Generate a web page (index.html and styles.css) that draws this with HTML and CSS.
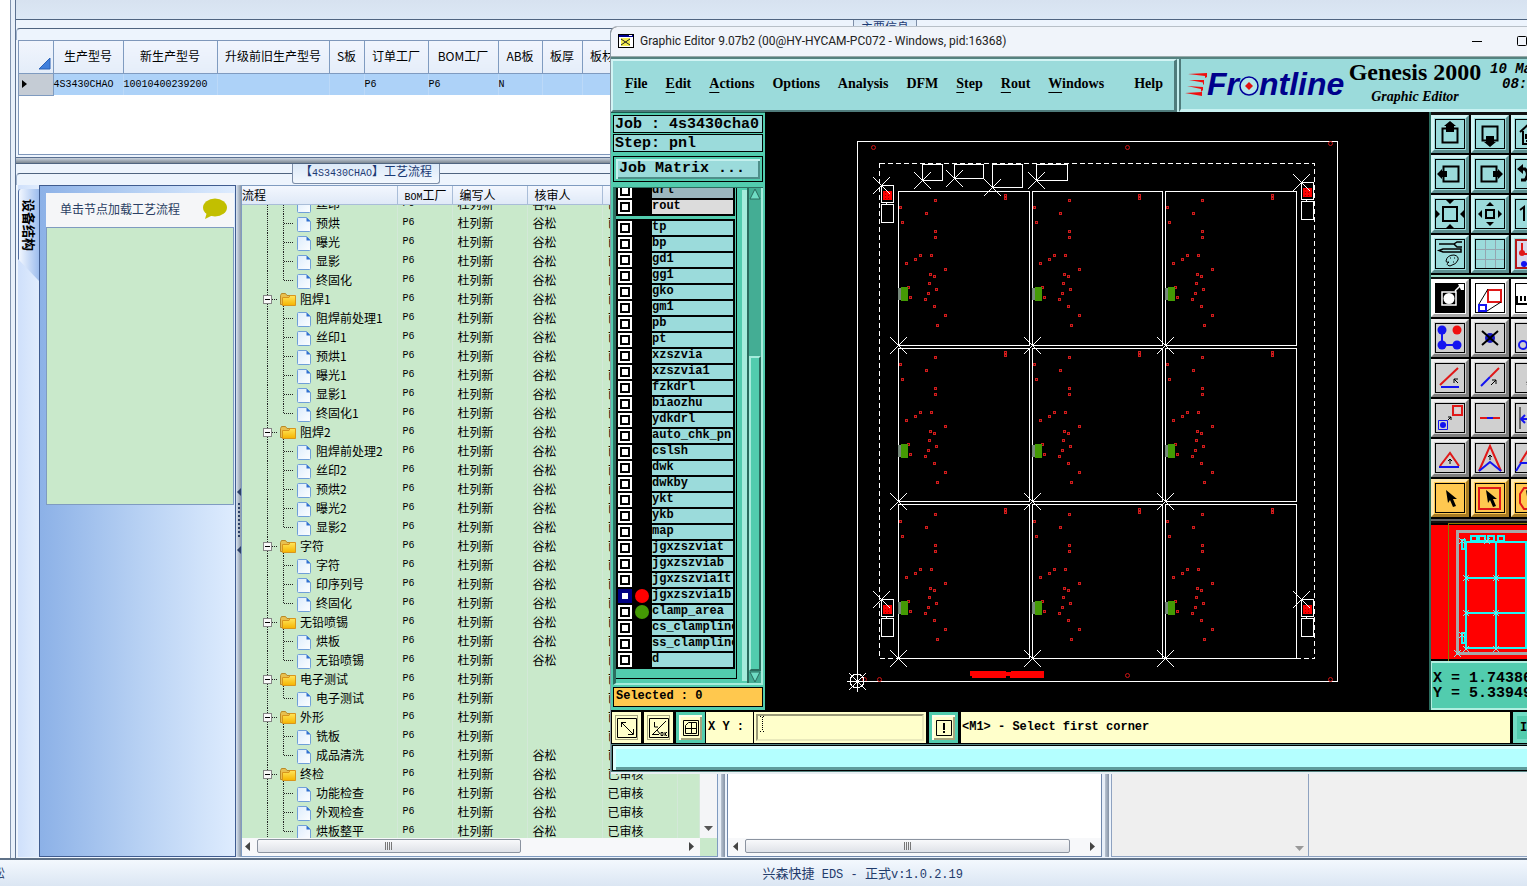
FILE: index.html
```html
<!DOCTYPE html>
<html lang="zh-CN">
<head>
<meta charset="utf-8">
<title>兴森快捷 EDS</title>
<link rel="stylesheet" href="styles.css">
</head>
<body>
<svg class="defs" aria-hidden="true">
  <defs>
    <linearGradient id="page-fill" x1="0" y1="0" x2="1" y2="1"><stop offset="0" stop-color="#dcecfc"/><stop offset="1" stop-color="#fdfeff"/></linearGradient>
    <linearGradient id="folder-fill" x1="0" y1="0" x2="0" y2="1"><stop offset="0" stop-color="#ffe65c"/><stop offset="1" stop-color="#f5b400"/></linearGradient>
    <g id="page"><path d="M.5 1.500q0-1 1-1H9.500l4 4V13.500q0 1-1 1H1.500q-1 0-1-1z" fill="url(#page-fill)" stroke="#6f9fd8"/><path d="M9.500.5v4h4z" fill="#2f6fd0"/></g>
    <g id="folder"><path d="M.5 2.500V11.500H14.500V2.500H7L5.500.5H1.500z" fill="#e8c050" stroke="#b98a28"/><path d="M2.500 12.500V4.500H9L10 2.500h5.500v10z" fill="url(#folder-fill)" stroke="#d8951c"/></g>
    <symbol id="row-folder" viewBox="0 0 58 19"><path d="M25.500 0V19M30 9.500h5" class="twig"/><path d="M41.500 16v3" class="twig"/><rect x="21.500" y="5.500" width="8" height="8" fill="#f8f8f8" stroke="#858585"/><path d="M23 9.500h5" stroke="#000"/><use href="#folder" x="38" y="3"/></symbol>
    <symbol id="row-child" viewBox="0 0 74 19"><path d="M25.500 0V19M41.500 0V19M42 9.500h10" class="twig"/><use href="#page" x="55" y="3"/></symbol>
    <symbol id="row-last" viewBox="0 0 74 19"><path d="M25.500 0V19M41.500 0V10M42 9.500h10" class="twig"/><use href="#page" x="55" y="3"/></symbol>
    <g id="cross"><path d="M-8-8L9 9M9-8L-8 9" stroke="#fff"/></g>
  </defs>
</svg>

<div class="app">
  <div class="edge"></div>
  <main class="work">
    <div class="ribbon"></div>
    <section class="group info">
      <div class="caption"><span class="rule lead-info"></span><h2 class="tab">主要信息</h2><span class="rule grow"></span></div>
      <div class="info-box">
        <table class="info-table">
          <colgroup><col class="w-mark"><col class="w-model"><col class="w-new"><col class="w-old"><col class="w-s"><col class="w-order"><col class="w-bom"><col class="w-ab"><col class="w-thick"><col class="w-thick"><col></colgroup>
          <thead><tr><th class="corner"><svg width="12" height="12"><path d="M11 0V11H0z" fill="#3f7fdc" stroke="#2a62b8"/></svg></th><th>生产型号</th><th>新生产型号</th><th>升级前旧生产型号</th><th>S板</th><th>订单工厂</th><th>BOM工厂</th><th>AB板</th><th>板厚</th><th>板材</th><th></th></tr></thead>
          <tbody><tr><td class="mark"><svg width="5" height="8"><path d="M0 0v8L5 4z"/></svg></td><td>4S3430CHAO</td><td>10010400239200</td><td></td><td></td><td>P6</td><td>P6</td><td>N</td><td></td><td></td><td></td></tr></tbody>
        </table>
      </div>
    </section>
    <div class="hsplit"></div>
    <section class="group flow">
      <div class="caption"><span class="rule lead-flow"></span><h2 class="tab">【<span class="code">4S3430CHAO</span>】工艺流程</h2><span class="rule grow"></span></div>
      <div class="columns">
        <nav class="side-tabs"><button class="side-tab" type="button">设备结构</button></nav>
        <aside class="side-panel">
          <div class="hint"><span>单击节点加载工艺流程</span><svg width="26" height="22" viewBox="0 0 26 22"><ellipse cx="13" cy="9.500" rx="12" ry="9" fill="#c2bf00"/><path d="M5 14L3 21l8-4z" fill="#c2bf00"/></svg></div>
          <div class="nodes"></div>
        </aside>
        <div class="vsplit"><svg width="6" height="66" viewBox="0 0 6 66"><path d="M5 0v8L1 4zM5 58v8L1 62z" fill="#2c3f66"/><path d="M3 15V50" stroke="#2c3f66" stroke-width="2" stroke-dasharray="2 2"/></svg></div>
        <section class="tree-box">
          <table class="tree">
            <thead><tr><th class="c-name">流程</th><th class="c-bom"><span class="code">BOM</span>工厂</th><th class="c-who">编写人</th><th class="c-who">核审人</th><th class="c-who"></th><th></th></tr></thead>
          </table>
          <div class="tree-body">
            <div class="tree-view"><table class="tree"><tbody id="tree-rows"></tbody></table></div>
            <div class="vbar"><svg width="9" height="5"><path d="M0 0h9L4.500 5z" fill="#555"/></svg></div>
          </div>
          <div class="hbar with-corner"><svg width="6" height="9"><path d="M5 0v9L0 4.500z" fill="#444"/></svg><span class="track"><span class="thumb thumb-tree"><i></i></span></span><svg width="6" height="9"><path d="M0 0v9L5 4.500z" fill="#444"/></svg></div>
        </section>
        <div class="vgap"></div>
        <section class="mid-box">
          <div class="mid-view"></div>
          <div class="hbar"><svg width="6" height="9"><path d="M5 0v9L0 4.500z" fill="#444"/></svg><span class="track"><span class="thumb thumb-mid"><i></i></span></span><svg width="6" height="9"><path d="M0 0v9L5 4.500z" fill="#444"/></svg></div>
        </section>
        <div class="vgap"></div>
        <section class="list-box"><svg width="9" height="5"><path d="M0 0h9L4.500 5z" fill="#999"/></svg></section>
        <section class="rest-box"></section>
      </div>
    </section>
  </main>
</div>
<footer class="status"><span class="user">谷松</span><span class="version">兴森快捷<span class="latin"> EDS - </span>正式<span class="latin">v:1.0.2.19</span></span></footer>

<div class="window">
  <header class="titlebar">
    <svg width="16" height="14" viewBox="0 0 16 14"><rect x=".5" y=".5" width="15" height="13" fill="#fff" stroke="#000"/><path d="M1 1h14v2H1z" fill="#000090"/><path d="M11 1.500h3" stroke="#fff"/><rect x="3" y="4" width="9" height="8" fill="#f5ee50"/><path d="M3 5l9 6M12 5l-9 6" stroke="#222"/></svg>
    <h1>Graphic Editor 9.07b2 (00@HY-HYCAM-PC072 - Windows, pid:16368)</h1>
    <button class="win-btn" type="button" aria-label="Minimize"><svg width="10" height="10"><path d="M0 5.500h10" stroke="#000"/></svg></button>
    <button class="win-btn" type="button" aria-label="Maximize"><svg width="10" height="10"><rect x=".5" y=".5" width="9" height="9" rx="1" fill="none" stroke="#000"/></svg></button>
  </header>
  <div class="top">
    <nav class="menu">
      <a href="#"><u>F</u>ile</a><a href="#"><u>E</u>dit</a><a href="#"><u>A</u>ctions</a><a href="#">Options</a><a href="#">Analysis</a><a href="#">DFM</a><a href="#"><u>S</u>tep</a><a href="#"><u>R</u>out</a><a href="#"><u>W</u>indows</a><a href="#" class="help">Help</a>
    </nav>
    <div class="brand">
      <div class="logo">
        <svg width="22" height="24" viewBox="0 0 22 24"><path d="M3 2L22 1V5L20 6V4zM4 8L19 8V12L18 13V10.500zM2 14L18 15V18L16 20V17zM0 21L17 20V24z" fill="#f01010"/></svg>
        <span class="logo-text">Fr<svg width="20" height="20" viewBox="0 0 20 20"><circle cx="10" cy="10" r="9" fill="#b4e6ea" stroke="#00009a" stroke-width="1.500"/><path d="M10 6l4 4-4 4-4-4z" fill="#e01010"/></svg>ntline</span>
      </div>
      <div class="product"><b>Genesis 2000</b><i>Graphic Editor</i></div>
      <div class="clock"><span>10 Mar</span><span>08:35</span></div>
    </div>
  </div>
  <div class="middle">
    <aside class="layers">
      <div class="field">Job : 4s3430cha0</div>
      <div class="field">Step: pnl</div>
      <button class="matrix" type="button">Job Matrix ...</button>
      <div class="layer-area">
        <div class="layer-frame" id="layer-list"></div>
        <div class="layer-bar"><svg width="12" height="12"><path d="M1 11L6 1l5 10z" fill="#6fdcc4" stroke="#2a6c5e"/></svg><span class="layer-thumb"></span><svg width="12" height="12"><path d="M1 1L6 11L11 1z" fill="#6fdcc4" stroke="#2a6c5e"/></svg></div>
      </div>
      <div class="selected">Selected : 0</div>
    </aside>
    <div class="canvas">
      <svg width="663" height="598" viewBox="765 112 663 598" shape-rendering="crispEdges" fill="none">
        <defs>
          <g id="unit">
            <g id="vias"></g>
            <path d="M3 96h7v14H3z" fill="#449a04"/><path d="M0 97h3v12H0z" fill="#75887a"/>
          </g>
          <g id="fiducial"><path d="M.5.5h12v17h-12zM.5 19.500h12v18h-12zM5.500 17v2" stroke="#fff"/><path d="M2 6h9v9H2z" fill="#f00"/><path d="M4.500 7v7M7.500 7v7" stroke="#900" stroke-dasharray="1 2"/><use href="#cross"/></g>
          <g id="origin" stroke="#fff"><circle r="7"/><path d="M-10 .5H11M.5-10V11M-8-8L9 9M9-8L-8 9"/></g>
        </defs>
        <g stroke="#fff">
          <path d="M857.500 141.500H1337.500V681.500H857.500z"/>
          <path d="M879.500 163.500H1314.500V658.500H879.500z" stroke-dasharray="5 3"/>
          <path d="M922.500 164.500h20v16h-20zM954.500 164.500h29v14h-29zM992.500 164.500h30v23h-30zM1036.500 164.500h31v16h-31z"/>
          <path d="M898.500 191.500h131v154h-131zM1032.500 191.500h130v154h-130zM1165.500 191.500h131v154h-131zM898.500 348.500h131v153h-131zM1032.500 348.500h130v153h-130zM1165.500 348.500h131v153h-131zM898.500 504.500h131v154h-131zM1032.500 504.500h130v154h-130zM1165.500 504.500h131v154h-131z"/>
        </g>
        <g id="units"></g>
        <g id="crosses"></g>
        <use href="#fiducial" x="881" y="185"/><use href="#fiducial" x="1301" y="182"/><use href="#fiducial" x="881" y="599"/><use href="#fiducial" x="1301" y="599"/>
        <g stroke="#d01414" shape-rendering="auto"><circle cx="873.500" cy="147.500" r="2"/><circle cx="1127.500" cy="147.500" r="2"/><circle cx="1330.500" cy="143.500" r="2"/><circle cx="1127.500" cy="675.500" r="2"/><circle cx="1330.500" cy="679.500" r="2"/><circle cx="864.500" cy="679.500" r="2"/><circle cx="879.500" cy="679.500" r="2"/></g>
        <path d="M970 671h36v1h5v-1h33v7h-34v-2h-4v2h-34v-2h-2z" fill="#f00"/>
        <use href="#origin" x="857" y="681"/>
      </svg>
    </div>
    <aside class="tools">
      <div class="pad" id="pad-view"></div>
      <div class="pad edit" id="pad-edit"></div>
      <div class="overview">
        <svg width="136" height="138" viewBox="1430 524 136 138" shape-rendering="crispEdges" fill="none">
          <path d="M1430 526h136v134h-136z" fill="#f00"/>
          <path d="M1447.500 662V524.500H1566" stroke="#8a7a00"/>
          <path d="M1566 532.500H1456.500V654.500H1566" stroke="#a8a8a8" stroke-width="3"/>
          <path d="M1566 543H1465V649H1566M1465 578.500H1566M1465 613.500H1566M1495 543V649M1525 543V649" stroke="#20f4f4" stroke-width="2"/>
          <path d="M1470 537h6v5h-6zM1478 537h6v5h-6zM1487 537h6v5h-6zM1497 537h6v5h-6zM1461 541h3v9h-3zM1461 634h3v10h-3z" stroke="#20f4f4" stroke-width="2"/>
          <g stroke="#7ce8e8"><path d="M1458 539l6 6m0-6l-6 6M1462 576l6 6m0-6l-6 6M1492 576l6 6m0-6l-6 6M1462 611l6 6m0-6l-6 6M1492 611l6 6m0-6l-6 6M1462 647l6 6m0-6l-6 6M1492 647l6 6m0-6l-6 6M1453 651l7 7m0-7l-7 7M1458 633l6 6m0-6l-6 6M1483 539l6 6m0-6l-6 6"/></g>
        </svg>
      </div>
      <div class="coords"><span>X = 1.74386</span><span>Y = 5.33949</span></div>
    </aside>
  </div>
  <div class="prompt">
    <button class="key" type="button" aria-label="Diagonal"><svg width="20" height="20" viewBox="0 0 20 20"><path d="M.5.5h19v19H.5zM4 4l12 12M4.500 9V4.500H9M16.500 11v5.500H11" fill="none" stroke="#000"/></svg></button>
    <button class="key" type="button" aria-label="Angle"><svg width="20" height="20" viewBox="0 0 20 20"><path d="M.5.5h19v19H.5zM3 17L17 3M3 16.500H10M5.500 4v5H9M8 12l3 4" fill="none" stroke="#000"/><path d="M12 14.500h2v3h-2zM16 14v4M18 14l-2 2 2 2" fill="none" stroke="#000"/></svg></button>
    <button class="key on" type="button" aria-label="Grid"><svg width="16" height="16" viewBox="0 0 16 16"><path d="M.5.5h15v15H.5zM2.500 5.500L5.500 2.500H13.500V13.500H2.500zM8.500 2.500V13.500M2.500 8.500H13.500" fill="none" stroke="#000"/></svg></button>
    <label class="xy" for="xy-input">X Y :</label>
    <div class="entry"><input id="xy-input" type="text"><svg class="caret" width="5" height="16"><path d="M0 .5h2M3 .5h2M2.500 1v14M0 15.500h2M3 15.500h2" stroke="#000" stroke-dasharray="1 1"/></svg></div>
    <button class="key on" type="button" aria-label="Alert"><svg width="16" height="16" viewBox="0 0 16 16"><path d="M.5.5h15v15H.5z" fill="none" stroke="#000"/><path d="M8 3v7M8 11v2" stroke="#000" stroke-width="2"/></svg></button>
    <div class="message">&lt;M1&gt; - Select first corner</div>
    <button class="unit-btn" type="button">Inch</button>
  </div>
  <div class="console"><div class="console-line"></div></div>
</div>
<script src="app.js"></script>
</body>
</html>
```
FILE: styles.css
```css
* { box-sizing: border-box; }
html, body { height: 100%; }
body {
  margin: 0; overflow: hidden; display: flex; flex-direction: column; position: relative;
  background: #dce7f4; color: #000;
  font: 12px/16px "Noto Sans CJK SC", sans-serif;
}
svg { display: block; flex: none; }
button, input { font: inherit; color: inherit; margin: 0; padding: 0; border-radius: 0; }
button { cursor: pointer; }
h1, h2 { margin: 0; font-weight: 400; }
.defs { position: absolute; width: 0; height: 0; }
.twig { stroke: #222; stroke-dasharray: 1 1; fill: none; }
.code { font-family: "Liberation Mono", monospace; font-size: 10px; line-height: 10px; }

.app { flex: 1; min-height: 0; display: flex; }
.edge { width: 15px; background: linear-gradient(90deg, #fff 10px, #8093ae 10px, #8093ae 11px, #e8f0fa 11px); }
.work { flex: 1; min-width: 0; display: flex; flex-direction: column; border-left: 1px solid #5d7291; background: #edf4fd; }
.ribbon { height: 19px; background: linear-gradient(#d7e2f0, #dce8f5); }
.group { border-top: 1px solid #4f6480; background: #edf4fd; display: flex; flex-direction: column; }
.caption { display: flex; height: 20px; }
.rule { border-top: 1px solid #4f6480; margin-top: 8px; }
.lead-info { width: 837px; }
.lead-flow { width: 276px; }
.rule.lead-info, .rule.lead-flow { border-left: 1px solid #9fb2cc; border-top-left-radius: 4px; }
.grow { flex: 1; }
.tab { border: 1px solid #7d8ea8; border-top: 0; border-radius: 0 0 3px 3px; padding: 0 7px; font-size: 12px; line-height: 14px; color: #1c3a73; background: linear-gradient(#dce9f8, #f3f8fe); }
.info { height: 139px; border-bottom: 1px solid #5a6f90; }
.info-box { flex: 1; margin: 0 0 2px 2px; border: 1px solid #7f97ba; border-right: 0; background: #fff; overflow: hidden; }
.info-table { border-collapse: collapse; table-layout: fixed; width: 100%; }
.info-table th { height: 32px; padding: 0 0 2px; font-weight: 400; border-right: 1px solid #7f9bc0; border-bottom: 1px solid #7f9bc0; background: linear-gradient(#f1f5fd, #e4edf9); white-space: nowrap; overflow: hidden; }
.info-table td { height: 22px; padding: 0; font: 10px/21px "Liberation Mono", monospace; background: #add2f8; border-right: 1px solid #bcd9f8; }
.info-table .mark { background: #c5ccd5; border-right: 1px solid #7f9bc0; border-bottom: 1px solid #7f9bc0; padding-left: 3px; }
.info-table .corner { padding: 14px 0 0 20px; }
.w-mark { width: 34px; } .w-model { width: 70px; } .w-new { width: 94px; } .w-old { width: 112px; } .w-s { width: 35px; }
.w-order { width: 64px; } .w-bom { width: 70px; } .w-ab { width: 44px; } .w-thick { width: 40px; }
.hsplit { height: 5px; background: linear-gradient(#c9d2dd, #7c8792); }

.flow { flex: 1; min-height: 0; padding-bottom: 1px; }
.flow .rule { margin-top: 9px; }
.flow .caption { height: 21px; }
.flow .tab { height: 20px; }
.columns { flex: 1; min-height: 0; display: flex; padding-left: 2px; }
.side-tabs { width: 22px; background: linear-gradient(90deg, #cfe0fb, #e0ecfd); border-right: 1px solid #3f5c90; padding-top: 4px; }
.side-tab { display: block; width: 21px; height: 92px; border: 0; border-left: 1px solid #4f6ca0; border-radius: 3px 0 0 0; background: linear-gradient(90deg, #f2f7ff, #9dbdee); clip-path: polygon(0 0, 100% 0, 100% 100%, 0 76%); writing-mode: vertical-rl; text-orientation: sideways; font-size: 13px; line-height: 18px; font-weight: 700; text-align: left; padding: 10px 0 0; }
.side-panel { width: 196px; border: 1px solid #3f5c90; border-left: 0; padding: 7px 1px 0 6px; background: linear-gradient(90deg, #8cb1e7 0, #b6d0f3 50%, #deecfe 100%); }
.hint { height: 34px; background: #f5f6f8; display: flex; align-items: center; justify-content: space-between; padding: 0 6px 2px 14px; color: #2b3f63; }
.nodes { height: 278px; background: #c9e9cb; border: 1px solid #7f9bc0; }
.vsplit { width: 5px; display: flex; align-items: center; background: linear-gradient(90deg, #dbe5f1, #8b98a8); }
.tree-box { width: 477px; display: flex; flex-direction: column; background: #c9e9cb; border: 1px solid #7f9bc0; }
.tree { border-collapse: collapse; table-layout: fixed; width: 100%; }
.tree thead { height: 18px; }
.tree th { height: 18px; padding: 0 0 0 7px; text-align: left; font-weight: 400; line-height: 16px; background: linear-gradient(#f3f7fe, #dfe9f7); border-right: 1px solid #a9bdd8; border-bottom: 1px solid #a9bdd8; white-space: nowrap; }
.tree th.c-name { padding-left: 0; }
.c-name { width: 155px; } .c-bom { width: 55px; } .c-who { width: 75px; }
.tree td { height: 19px; padding: 0 0 0 5px; line-height: 18px; white-space: nowrap; border-right: 1px solid #d3e8d8; overflow: hidden; }
.tree td.c-name { padding: 0; }
.tree td.c-bom { font: 10px/18px "Liberation Mono", monospace; }
.name { display: flex; }
.tree-body { flex: 1; min-height: 0; display: flex; }
.tree-view { flex: 1; min-width: 0; overflow: hidden; }
.tree-view .tree { margin-top: -10px; }
.vbar { width: 17px; background: #f4f5f7; display: flex; align-items: flex-end; justify-content: center; padding-bottom: 7px; }
.hbar { height: 18px; display: flex; align-items: center; gap: 6px; padding: 0 5px 2px; background: #f7f8fa; }
.with-corner { margin-right: 17px; padding-left: 3px; }
.track { flex: 1; display: flex; }
.thumb { height: 14px; border: 1px solid #8b93a0; border-radius: 2px; background: linear-gradient(#f8f9fb, #dfe2e8); display: flex; align-items: center; justify-content: center; }
.thumb i { width: 8px; height: 8px; background: repeating-linear-gradient(90deg, #777 0 1px, transparent 1px 2px); }
.thumb-tree { width: 62%; }
.thumb-mid { width: 96%; }
.vgap { width: 9px; background: linear-gradient(90deg, #e8eff8 3px, #b9c4d2 3px, #8492a5 7px, #edf4fd 7px); }
.mid-box { width: 375px; border: 1px solid #6f87ab; display: flex; flex-direction: column; background: #fff; }
.mid-view { flex: 1; }
.list-box { width: 198px; border: 1px solid #8ea2c0; background: #efefef; display: flex; align-items: flex-end; justify-content: flex-end; padding: 0 4px 5px; }
.rest-box { flex: 1; background: #f0f0f0; border-bottom: 1px solid #8ea2c0; }
.status { height: 28px; display: flex; border-top: 2px solid #5f7187; background: linear-gradient(#f3f8fe, #dbe6f3); color: #1f3b6b; line-height: 26px; overflow: hidden; }
.user { width: 50%; margin-left: -19px; }
.version { margin-left: 18px; font-size: 13px; white-space: pre; }
.latin { font: 12px/16px "Liberation Mono", monospace; }

/* Graphic Editor window, floating over the desktop application */
.window { position: absolute; left: 610px; right: -40px; top: 26px; bottom: 112px; display: flex; flex-direction: column; background: #000; border-left: 1px solid #8b9aa6; border-top: 1px solid #b8c0c8; border-radius: 7px 7px 0 0; overflow: hidden; }
.titlebar { height: 30px; display: flex; align-items: center; gap: 6px; padding: 0 0 2px 7px; background: #f0f4fa; border-bottom: 1px solid #9aa; }
.titlebar h1 { flex: 1; font: 12px/16px Roboto, "Open Sans", sans-serif; color: #222; }
.win-btn { width: 39px; height: 28px; border: 0; background: none; display: grid; place-items: center; }
.win-btn:last-child { margin-right: 26px; }
.top { height: 55px; display: flex; background: #c3eeee; border-top: 2px solid #55827f; }
.menu { width: 566px; display: flex; gap: 18px; align-items: center; padding: 0 11px 4px 12px; margin-right: 2px; background: #9bdbdb; border: 2px solid #d2f4f4; border-right: 3px solid #4f7b7b; border-bottom: 2px solid #4f7b7b; font: 700 14px/18px "Liberation Serif", serif; }
.menu a { color: #000; text-decoration: none; }
.menu u { text-underline-offset: 4px; }
.menu .help { margin-left: auto; }
.brand { flex: 1; min-width: 0; display: flex; background: #9bdbdb; border-left: 2px solid #4f7b7b; border-bottom: 3px solid #c9f2f2; padding-left: 4px; overflow: hidden; }
.logo { display: flex; align-items: center; width: 161px; flex: none; }
.logo-text { display: flex; align-items: center; font: italic 700 32px/36px "Liberation Sans", sans-serif; color: #00008c; }
.logo-text svg { margin-top: 4px; }
.product { width: 138px; flex: none; display: flex; flex-direction: column; align-items: center; font: 700 24px/24px "Liberation Serif", serif; padding-top: 1px; white-space: nowrap; }
.product i { font-size: 14px; line-height: 26px; }
.clock { font: italic 700 14px/15px "Liberation Mono", monospace; display: flex; flex-direction: column; padding: 3px 0 0 6px; white-space: nowrap; }
.clock span + span { padding-left: 12px; }

.middle { flex: 1; min-height: 0; display: flex; }
.layers { width: 154px; display: flex; flex-direction: column; gap: 1px; padding: 2px; background: #52ccae; border-top: 1px solid #17594c; font: 700 12px/15px "Liberation Mono", monospace; }
.field { height: 18px; border: 1px solid #000; background: #9bdbdb; font-size: 15px; line-height: 17px; white-space: nowrap; padding-left: 1px; }
.matrix { height: 26px; margin: 3px 0 4px; border: 1px solid #000; background: #9bdbdb; font-size: 15px; line-height: 18px; text-align: left; padding-left: 5px; box-shadow: inset 0 0 0 2px #52ccae, inset 3px 3px 0 1px #c5f0ee, inset -3px -3px 0 1px #4f8f8a; }
.layer-area { flex: 1; min-height: 0; display: flex; gap: 3px; overflow: hidden; border-left: 3px solid #2c6e60; border-top: 1px solid #2c6e60; border-bottom: 2px solid #a5ecdc; }
.layer-frame { width: 121px; flex: none; border-right: 1px solid #000; border-bottom: 1px solid #000; margin-bottom: 4px; overflow: hidden; }
.layer-set { width: 119px; background: #000; padding: 1px 2px; margin-bottom: 4px; }
.layer-set:first-child { margin-top: -6px; margin-bottom: 3px; }
.layer { height: 16px; display: flex; align-items: center; gap: 2px; }
.layer input { appearance: none; flex: none; width: 14px; height: 14px; border: 2px solid #fff; background: #fff; box-shadow: inset 0 0 0 2px #000; }
.layer.active input { border-color: #000084; box-shadow: inset 0 0 0 2px #000084; }
.dot { width: 14px; height: 14px; border-radius: 50%; flex: none; margin: 0 1px; }
.dot.red { background: #f00; } .dot.green { background: #449a04; }
.layer label { flex: 1; min-width: 0; height: 14px; line-height: 13px; overflow: hidden; white-space: nowrap; background: #9bdbdb; }
.layer.gray label { background: #9bb6be; } .layer.silver label { background: #dcdcdc; }
.layer-bar { width: 16px; display: flex; flex-direction: column; align-items: center; background: #44ad94; border-left: 2px solid #2a6c5e; border-right: 2px solid #a5ecdc; margin-left: 7px; box-shadow: -7px 0 0 -2px #a5ecdc; }
.layer-thumb { flex: 1; width: 12px; margin-top: 156px; background: #52ccae; border: 2px solid #a5ecdc; border-right-color: #2a6c5e; border-bottom-color: #2a6c5e; }
.selected { height: 20px; margin: 1px 0; border: 1px solid #000; background: #ffc84e; line-height: 17px; padding-left: 2px; }
.canvas { flex: 1; min-width: 0; background: #000; overflow: hidden; }
.tools { width: 138px; flex: none; display: flex; flex-direction: column; border-left: 2px solid #2a6c5e; background: #111; padding-top: 3px; }
.pad { display: grid; grid-template-columns: repeat(3, 40px); grid-auto-rows: 40px; border-bottom: 2px solid #9bdcc8; background: #000; margin-bottom: 2px; }
.tool { width: 38px; height: 38px; background: #9bdbdb; border: 3px solid; border-color: #d2f4f4 #5c8f8f #5c8f8f #d2f4f4; display: grid; place-items: center; }
.tool svg { width: 30px; height: 30px; }
.edit .tool { background: #d0d0d0; border-color: #f0f0f0 #808080 #808080 #f0f0f0; }
.edit .tool.white { background: #fff; border-color: #fff #aaa #aaa #fff; }
.edit .tool.gold { background: #ffc850; border-color: #ffe9ae #a87c24 #a87c24 #ffe9ae; }
.edit { border-color: #666; }
.overview { height: 138px; background: #000; overflow: hidden; }
.coords { flex: 1; display: flex; flex-direction: column; justify-content: center; background: #52ccae; border: 2px solid #b2efe0; border-left: 1px solid #b2efe0; font: 700 15px/15px "Liberation Mono", monospace; padding-left: 1px; white-space: nowrap; }

.prompt { height: 34px; display: flex; gap: 3px; padding: 1px 0 1px 1px; border-top: 1px solid #000; background: #000; font: 700 12px/16px "Liberation Mono", monospace; flex: none; }
.key { width: 29px; flex: none; display: grid; place-items: center; background: #ffffcb; border: 1px solid #ffffcb; box-shadow: inset 0 0 0 2px #ffffcb, inset 0 0 0 3px #a5a57f; }
.key.on { border: 3px solid #52ccae; box-shadow: inset 2px 2px 0 #ffffe8, inset -2px -2px 0 #a5a57f; }
.xy { width: 47px; flex: none; margin: 0 -2px; padding-left: 2px; background: #ffffcb; line-height: 30px; white-space: nowrap; }
.entry { width: 172px; flex: none; display: flex; position: relative; background: #ffffcb; padding: 2px; }
.entry input { flex: 1; min-width: 0; background: #ffffcb; border: 2px solid; border-color: #9a9a78 #e9e9bb #e9e9bb #9a9a78; padding-left: 8px; }
.caret { position: absolute; left: 6px; top: 4px; }
.message { flex: 1; background: #ffffcb; line-height: 30px; padding-left: 1px; }
.unit-btn { width: 54px; background: #52ccae; border: 4px solid #72dcc4; text-align: left; padding-left: 3px; }
.console { height: 30px; padding: 1px; background: #55827f; border-bottom: 2px solid #e8f0f4; flex: none; }
.console-line { height: 26px; border: 1px solid #000; background: #b4ffff; box-shadow: inset 3px 3px 0 #dcffff, inset -2px -3px 0 #5f9c9c; }
```
FILE: app.js
```js
// Process tree: [group, [[step, reviewed], ...]]
const R = true;
const flow = [
  [null, [['丝印', R], ['预烘', R], ['曝光', R], ['显影', R], ['终固化', R]]],
  ['阻焊1', [['阻焊前处理1', R], ['丝印1', R], ['预烘1', R], ['曝光1', R], ['显影1', R], ['终固化1', R]]],
  ['阻焊2', [['阻焊前处理2', R], ['丝印2', R], ['预烘2', R], ['曝光2', R], ['显影2', R]]],
  ['字符', [['字符', R], ['印序列号', R], ['终固化', R]]],
  ['无铅喷锡', [['烘板', R], ['无铅喷锡', R]]],
  ['电子测试', [['电子测试', false]]],
  ['外形', [['铣板', false], ['成品清洗', R]]],
  ['终检', [['功能检查', R], ['外观检查', R], ['烘板整平', R]]]
];
const pendingGroups = ['电子测试', '外形'];
const treeRow = (kind, width, name, reviewed) =>
  `<tr><td class="c-name"><span class="name"><svg width="${width}" height="19"><use href="#row-${kind}"/></svg>${name}</span></td>` +
  `<td class="c-bom">P6</td><td class="c-who">杜列新</td><td class="c-who">${reviewed ? '谷松' : ''}</td><td class="c-who">已审核</td><td></td></tr>`;
document.getElementById('tree-rows').innerHTML = flow.map(([group, steps]) =>
  (group ? treeRow('folder', 58, group, !pendingGroups.includes(group)) : '') +
  steps.map(([name, ok], i) => treeRow(i === steps.length - 1 ? 'last' : 'child', 74, name, ok)).join('')
).join('');

// Layer list
const layer = (name, cls = '', dot = '') =>
  `<div class="layer ${cls}"><input type="checkbox" id="layer-${name}"><span class="dot ${dot}"></span><label for="layer-${name}">${name}</label></div>`;
const boards = ['tp', 'bp', 'gd1', 'gg1', 'gko', 'gm1', 'pb', 'pt', 'xzszvia', 'xzszvia1', 'fzkdrl', 'biaozhu', 'ydkdrl',
  'auto_chk_pnl', 'cslsh', 'dwk', 'dwkby', 'ykt', 'ykb', 'map', 'jgxzszviat', 'jgxzszviab', 'jgxzszvia1t'];
document.getElementById('layer-list').innerHTML =
  `<div class="layer-set">${layer('drl', 'gray')}${layer('rout', 'silver')}</div><div class="layer-set">` +
  boards.map(n => layer(n)).join('') + layer('jgxzszvia1b', 'active', 'red') + layer('clamp_area', '', 'green') +
  ['cs_clampline', 'ss_clampline', 'd'].map(n => layer(n)).join('') + '</div>';

// Panel drawing
const vias = [[2, 16], [37, 9], [28, 22], [4, 31], [37, 40], [37, 46], [22, 64], [33, 64], [17, 68], [8, 72], [47, 78], [32, 83],
  [36, 85], [31, 92], [10, 96], [38, 98], [30, 102], [12, 106], [27, 108], [36, 115], [47, 124], [39, 134], [107, 4], [107, 7]];
document.getElementById('vias').innerHTML = vias.map(([x, y]) =>
  `<path d="M${x - 1} ${y - 1}h3v3h-3z" fill="#d01c1c"/><path d="M${x} ${y}h1v1h-1z" fill="#400"/>`).join('');
const cols = [898, 1032, 1165];
document.getElementById('units').innerHTML = [191, 348, 505].map(y =>
  cols.map(x => `<use href="#unit" x="${x}" y="${y}"/>`).join('')).join('');
const marks = [[922, 180], [954, 178], [992, 187], [1036, 180]];
[345, 501, 658].forEach(y => cols.forEach(x => marks.push([x, y])));
document.getElementById('crosses').innerHTML = marks.map(([x, y]) => `<use href="#cross" x="${x}" y="${y}"/>`).join('');

// Tool pads: [label, drawing, tone]
const k = 'fill="none" stroke="#000"';
const red = 'fill="none" stroke="#e01818" stroke-width="2"';
const blue = 'fill="none" stroke="#1414f0" stroke-width="2"';
const cursor = '<path d="M11 7l2 13 2-3 3 7 3-1-3-7h4z"/>';
const tool = ([label, art, tone = '']) =>
  `<button type="button" class="tool ${tone}" aria-label="${label}"><svg viewBox="0 0 30 30"><rect x=".5" y=".5" width="29" height="29" ${k}/>${art}</svg></button>`;
const view = [
  ['Pan up', `<path d="M7.500 9.500h15v14h-15z" ${k} stroke-width="2"/><path d="M9 7l6-5 6 5h-2v6h-8V7z"/>`],
  ['Pan down', `<path d="M7.500 7.500h15v14h-15z" ${k} stroke-width="2"/><path d="M11 17h8v6h2l-6 5-6-5h2z"/>`],
  ['Home', `<path d="M5 13L15 4l10 9M8 12v13h14V12M11 16h5v3h-5zM11 22h5" ${k} stroke-width="2"/>`],
  ['Pan left', `<path d="M8.500 7.500h15v15h-15z" ${k} stroke-width="2"/><path d="M2 15l5-5v2h5v6H7v2z"/>`],
  ['Pan right', `<path d="M6.500 7.500h15v15h-15z" ${k} stroke-width="2"/><path d="M28 15l-5-5v2h-5v6h5v2z"/>`],
  ['Undo', `<path d="M6 10h4q5 5 0 11H6" ${k} stroke-width="3"/><path d="M2 10l6-5v10z"/>`],
  ['Zoom in', `<path d="M8 8h14v14H8z" ${k} stroke-width="2"/><path d="M10 0h10l-5 5zM10 30h10l-5-5zM0 10v10l5-5zM30 10v10l-5-5z"/>`],
  ['Zoom out', `<path d="M11 11h8v8h-8z" ${k} stroke-width="2"/><path d="M11 7h8l-4-4zM11 23h8l-4 4zM7 11v8l-4-4zM23 11v8l4-4z"/>`],
  ['Scale 1:1', `<path d="M5 11l4-3v14M18 11l4-3v14" ${k} stroke-width="2"/>`],
  ['Settings', `<path d="M4 5h15M27 3h-5l-3 2 3 3h5M8 10h18v3H8l-4-1.500z" ${k} stroke-width="1.500"/><path d="M11 22q1-6 8-6 5 1 4 5t-8 6q-5-1-1-4-3 1-3-1zM15 19h1M19 19h1M18 23h1" ${k}/>`],
  ['Grid', '<path d="M10.500 1v28M20.500 1v28M1 10.500h28M1 20.500h28" stroke="#94a6b0" fill="none"/>'],
  ['Nets', `<rect width="30" height="30" fill="#d8d8ea" stroke="#b01818" stroke-width="4"/><path d="M7 4v11h8" ${red}/><path d="M8 25h6V5" ${blue}/><circle cx="7" cy="14" r="3" fill="#e01818"/><circle cx="9" cy="25" r="3" fill="#1414f0"/>`]
];
const edit = [
  ['Feature', '<path d="M0 0h30v30H0z"/><path d="M7 9h14v13H7zM20 8l6-6" fill="none" stroke="#fff" stroke-width="1.500"/><circle cx="14" cy="15.500" r="5.500" fill="#fff"/><path d="M23 1h6v6h-3z" fill="#fff"/>', 'white'],
  ['Resize', `<path d="M13 7h13v12H13z" ${red}/><path d="M4 22h7v6H4z" ${blue}/><path d="M4 21L13 6M12 28l14-9" ${k}/>`, 'white'],
  ['Measure', `<path d="M2 13v8h26v-8M6 13v5M10 13v5M14 13v5" ${k} stroke-width="2"/>`, 'white'],
  ['Add points', `<path d="M7 7v15h15" ${blue} stroke-width="3"/><g fill="#1414f0"><circle cx="7" cy="7" r="4.500"/><circle cx="7" cy="22" r="4.500"/><circle cx="22" cy="22" r="4.500"/></g><circle cx="22" cy="7" r="4.500" fill="#f01010"/>`],
  ['Delete', `<circle cx="15" cy="15" r="5" fill="#1414c0"/><path d="M7 8l16 14M23 8L7 22" ${k} stroke-width="2"/>`],
  ['Copy', `<circle cx="8" cy="22" r="4" ${blue}/><path d="M12 18l8-8" ${k}/>`],
  ['Angle', `<path d="M5 22L23 5" ${red}/><path d="M6 24h18" ${blue}/><path d="M23 20l-4-4m0 4v-4h4" ${k}/>`],
  ['Line', `<path d="M15 14L24 5" ${red}/><path d="M6 23l9-9" ${blue}/><path d="M16 22l5-5m-4 0h4v4" ${k}/>`],
  ['Trim', `<path d="M16 10v10l-4 2M12 20l4-4" ${k} stroke-width="2"/>`],
  ['Move', `<path d="M18 3h9v9h-9z" ${red}/><circle cx="22.500" cy="7.500" r="2.500" fill="#e8d0d0"/><path d="M3.500 17.500h9v9h-9z" fill="none" stroke="#1414f0"/><circle cx="8" cy="22" r="3" fill="#1414f0"/><path d="M13 17l3-3m-3 0h3v3" ${k}/>`],
  ['Join', `<path d="M5 15h20" ${red}/><path d="M12 15h6" ${blue}/>`],
  ['Stretch', `<path d="M5 4v22" ${k}/><path d="M6 16h10M10 12l-4 4 4 4M14 8v14" ${blue}/>`],
  ['Raise', `<path d="M5 23L15 10l9 13" ${red}/><path d="M4 24h20" ${blue}/><path d="M15 21v-5m-2 2l2-2 2 2" ${k}/>`],
  ['Peak', `<path d="M4 28L15 3l11 25" ${red}/><path d="M4 28l11-9 11 9" ${blue}/><path d="M15 17v-5m-2 2l2-2 2 2" ${k}/>`],
  ['Slope', `<path d="M5 20L15 4h8" ${red}/><path d="M1 28l5-8h12" ${blue}/>`],
  ['Select', cursor, 'gold'],
  ['Select in box', `<path d="M4 5h21v21H4z" ${red}/>${cursor}`, 'gold'],
  ['Select in polygon', `<path d="M9 5h12l6 8v8l-6 5H9l-4-6v-9z" ${red}/>${cursor}`, 'gold']
];
document.getElementById('pad-view').innerHTML = view.map(tool).join('');
document.getElementById('pad-edit').innerHTML = edit.map(tool).join('');
```
